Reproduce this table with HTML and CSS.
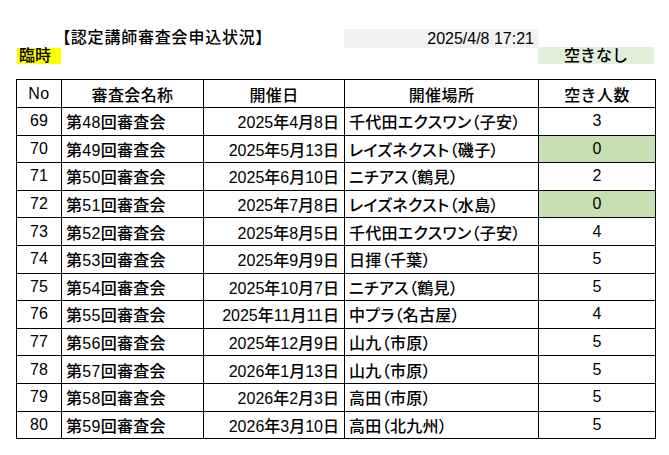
FILE: index.html
```html
<!DOCTYPE html>
<html lang="ja">
<head>
<meta charset="utf-8">
<title>認定講師審査会申込状況</title>
<link rel="stylesheet" href="styles.css">
</head>
<body>
<div class="sheet">
  <div class="top">
    <div class="title">【認定講師審査会申込状況】</div>
    <div class="stamp">2025/4/8 17:21</div>
    <div class="rinji">臨時</div>
    <div class="legend">空きなし</div>
  </div>
  <table class="status">
    <colgroup>
      <col class="c-no"><col class="c-name"><col class="c-date"><col class="c-place"><col class="c-free">
    </colgroup>
    <thead>
      <tr><th>No</th><th>審査会名称</th><th>開催日</th><th>開催場所</th><th>空き人数</th></tr>
    </thead>
    <tbody>
      <tr><td class="no">69</td><td class="name">第48回審査会</td><td class="date">2025年4月8日</td><td class="place">千代田エクスワン（子安）</td><td class="free">3</td></tr>
      <tr><td class="no">70</td><td class="name">第49回審査会</td><td class="date">2025年5月13日</td><td class="place">レイズネクスト（磯子）</td><td class="free full">0</td></tr>
      <tr><td class="no">71</td><td class="name">第50回審査会</td><td class="date">2025年6月10日</td><td class="place">ニチアス（鶴見）</td><td class="free">2</td></tr>
      <tr><td class="no">72</td><td class="name">第51回審査会</td><td class="date">2025年7月8日</td><td class="place">レイズネクスト（水島）</td><td class="free full">0</td></tr>
      <tr><td class="no">73</td><td class="name">第52回審査会</td><td class="date">2025年8月5日</td><td class="place">千代田エクスワン（子安）</td><td class="free">4</td></tr>
      <tr><td class="no">74</td><td class="name">第53回審査会</td><td class="date">2025年9月9日</td><td class="place">日揮（千葉）</td><td class="free">5</td></tr>
      <tr><td class="no">75</td><td class="name">第54回審査会</td><td class="date">2025年10月7日</td><td class="place">ニチアス（鶴見）</td><td class="free">5</td></tr>
      <tr><td class="no">76</td><td class="name">第55回審査会</td><td class="date">2025年11月11日</td><td class="place">中プラ（名古屋）</td><td class="free">4</td></tr>
      <tr><td class="no">77</td><td class="name">第56回審査会</td><td class="date">2025年12月9日</td><td class="place">山九（市原）</td><td class="free">5</td></tr>
      <tr><td class="no">78</td><td class="name">第57回審査会</td><td class="date">2026年1月13日</td><td class="place">山九（市原）</td><td class="free">5</td></tr>
      <tr><td class="no">79</td><td class="name">第58回審査会</td><td class="date">2026年2月3日</td><td class="place">高田（市原）</td><td class="free">5</td></tr>
      <tr><td class="no">80</td><td class="name">第59回審査会</td><td class="date">2026年3月10日</td><td class="place">高田（北九州）</td><td class="free">5</td></tr>
    </tbody>
  </table>
</div>
</body>
</html>
```

FILE: styles.css
```css
html, body {
  margin: 0;
  background: #ffffff;
}

body {
  color: #000000;
  font-family: "Liberation Sans", "Noto Sans CJK JP", sans-serif;
  font-size: 16px;
  font-weight: 500;
}

.sheet {
  padding: 29px 0 0 16px;
}

.top {
  display: grid;
  grid-template-columns: 45px 142px 141px 194px 116px;
  grid-template-rows: 18px 17px;
  margin-bottom: 15px;
}

.title {
  grid-column: 1 / 4;
  grid-row: 1;
  padding-left: 46px;
  line-height: 18px;
  white-space: nowrap;
  font-feature-settings: "palt";
  letter-spacing: 0.8px;
}

.stamp {
  grid-column: 4;
  grid-row: 1;
  height: 19px;
  background: #f2f2f2;
  text-align: right;
  padding-right: 5px;
  line-height: 19px;
  margin-right: -1px;
}

.rinji {
  grid-column: 1;
  grid-row: 2;
  margin-left: 1px;
  margin-top: 1px;
  padding-left: 2px;
  background: #ffff00;
  line-height: 16px;
}

.legend {
  grid-column: 5;
  grid-row: 2;
  background: #e2efda;
  text-align: center;
  line-height: 17px;
}

.status {
  border-collapse: collapse;
  table-layout: fixed;
  width: 639px;
}

.c-no { width: 45px; }
.c-name { width: 142px; }
.c-date { width: 141px; }
.c-place { width: 194px; }
.c-free { width: 117px; }

.status th,
.status td {
  border: 1px solid #000000;
  padding: 0 4px;
  white-space: nowrap;
  font-weight: 500;
  vertical-align: middle;
}

.status th {
  height: 27px;
  text-align: center;
  letter-spacing: 0.4px;
}

.status td {
  height: 26.6px;
}

.status .no,
.status .free {
  text-align: center;
}

.status .name {
  text-align: left;
  letter-spacing: 0.3px;
}

.status .place {
  text-align: left;
  font-feature-settings: "palt";
  letter-spacing: 0.3px;
}

.status .date {
  text-align: right;
  padding-right: 5px;
}

.status .full {
  background: #c6e0b4;
}
```
